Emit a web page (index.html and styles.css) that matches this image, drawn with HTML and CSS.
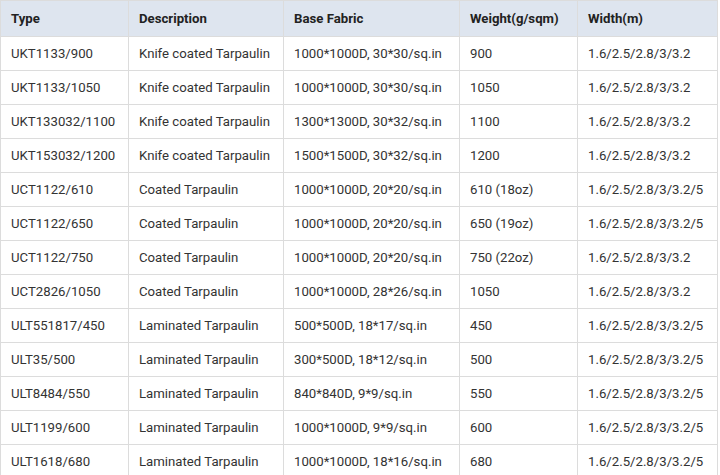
FILE: index.html
```html
<!DOCTYPE html>
<html>
<head>
<meta charset="utf-8">
<link rel="stylesheet" href="styles.css">
</head>
<body>
<table class="spec">
<colgroup>
<col class="c1"><col class="c2"><col class="c3"><col class="c4"><col class="c5">
</colgroup>
<thead>
<tr><th>Type</th><th>Description</th><th>Base Fabric</th><th>Weight(g/sqm)</th><th>Width(m)</th></tr>
</thead>
<tbody>
<tr><td>UKT1133/900</td><td>Knife coated Tarpaulin</td><td>1000*1000D, 30*30/sq.in</td><td>900</td><td>1.6/2.5/2.8/3/3.2</td></tr>
<tr><td>UKT1133/1050</td><td>Knife coated Tarpaulin</td><td>1000*1000D, 30*30/sq.in</td><td>1050</td><td>1.6/2.5/2.8/3/3.2</td></tr>
<tr><td>UKT133032/1100</td><td>Knife coated Tarpaulin</td><td>1300*1300D, 30*32/sq.in</td><td>1100</td><td>1.6/2.5/2.8/3/3.2</td></tr>
<tr><td>UKT153032/1200</td><td>Knife coated Tarpaulin</td><td>1500*1500D, 30*32/sq.in</td><td>1200</td><td>1.6/2.5/2.8/3/3.2</td></tr>
<tr><td>UCT1122/610</td><td>Coated Tarpaulin</td><td>1000*1000D, 20*20/sq.in</td><td>610 (18oz)</td><td>1.6/2.5/2.8/3/3.2/5</td></tr>
<tr><td>UCT1122/650</td><td>Coated Tarpaulin</td><td>1000*1000D, 20*20/sq.in</td><td>650 (19oz)</td><td>1.6/2.5/2.8/3/3.2/5</td></tr>
<tr><td>UCT1122/750</td><td>Coated Tarpaulin</td><td>1000*1000D, 20*20/sq.in</td><td>750 (22oz)</td><td>1.6/2.5/2.8/3/3.2</td></tr>
<tr><td>UCT2826/1050</td><td>Coated Tarpaulin</td><td>1000*1000D, 28*26/sq.in</td><td>1050</td><td>1.6/2.5/2.8/3/3.2</td></tr>
<tr><td>ULT551817/450</td><td>Laminated Tarpaulin</td><td>500*500D, 18*17/sq.in</td><td>450</td><td>1.6/2.5/2.8/3/3.2/5</td></tr>
<tr><td>ULT35/500</td><td>Laminated Tarpaulin</td><td>300*500D, 18*12/sq.in</td><td>500</td><td>1.6/2.5/2.8/3/3.2/5</td></tr>
<tr><td>ULT8484/550</td><td>Laminated Tarpaulin</td><td>840*840D, 9*9/sq.in</td><td>550</td><td>1.6/2.5/2.8/3/3.2/5</td></tr>
<tr><td>ULT1199/600</td><td>Laminated Tarpaulin</td><td>1000*1000D, 9*9/sq.in</td><td>600</td><td>1.6/2.5/2.8/3/3.2/5</td></tr>
<tr><td>ULT1618/680</td><td>Laminated Tarpaulin</td><td>1000*1000D, 18*16/sq.in</td><td>680</td><td>1.6/2.5/2.8/3/3.2/5</td></tr>
</tbody>
</table>
</body>
</html>
```
FILE: styles.css
```css
html, body {
  margin: 0;
  padding: 0;
  background: #fff;
}
.spec {
  border-collapse: collapse;
  table-layout: fixed;
  width: 717px;
  font-family: Roboto, "Liberation Sans", sans-serif;
  font-size: 13.2px;
  color: #333;
}
.c1 { width: 128px; }
.c2 { width: 155px; }
.c3 { width: 176px; }
.c4 { width: 118px; }
.c5 { width: 140px; }
.spec th, .spec td {
  border: 1px solid #dcdcdc;
  text-align: left;
  padding: 0 10px;
  white-space: nowrap;
}
.spec th {
  background: #dee5ef;
  font-weight: bold;
  color: #222;
  height: 35px;
}
.spec td {
  height: 33px;
}
```
